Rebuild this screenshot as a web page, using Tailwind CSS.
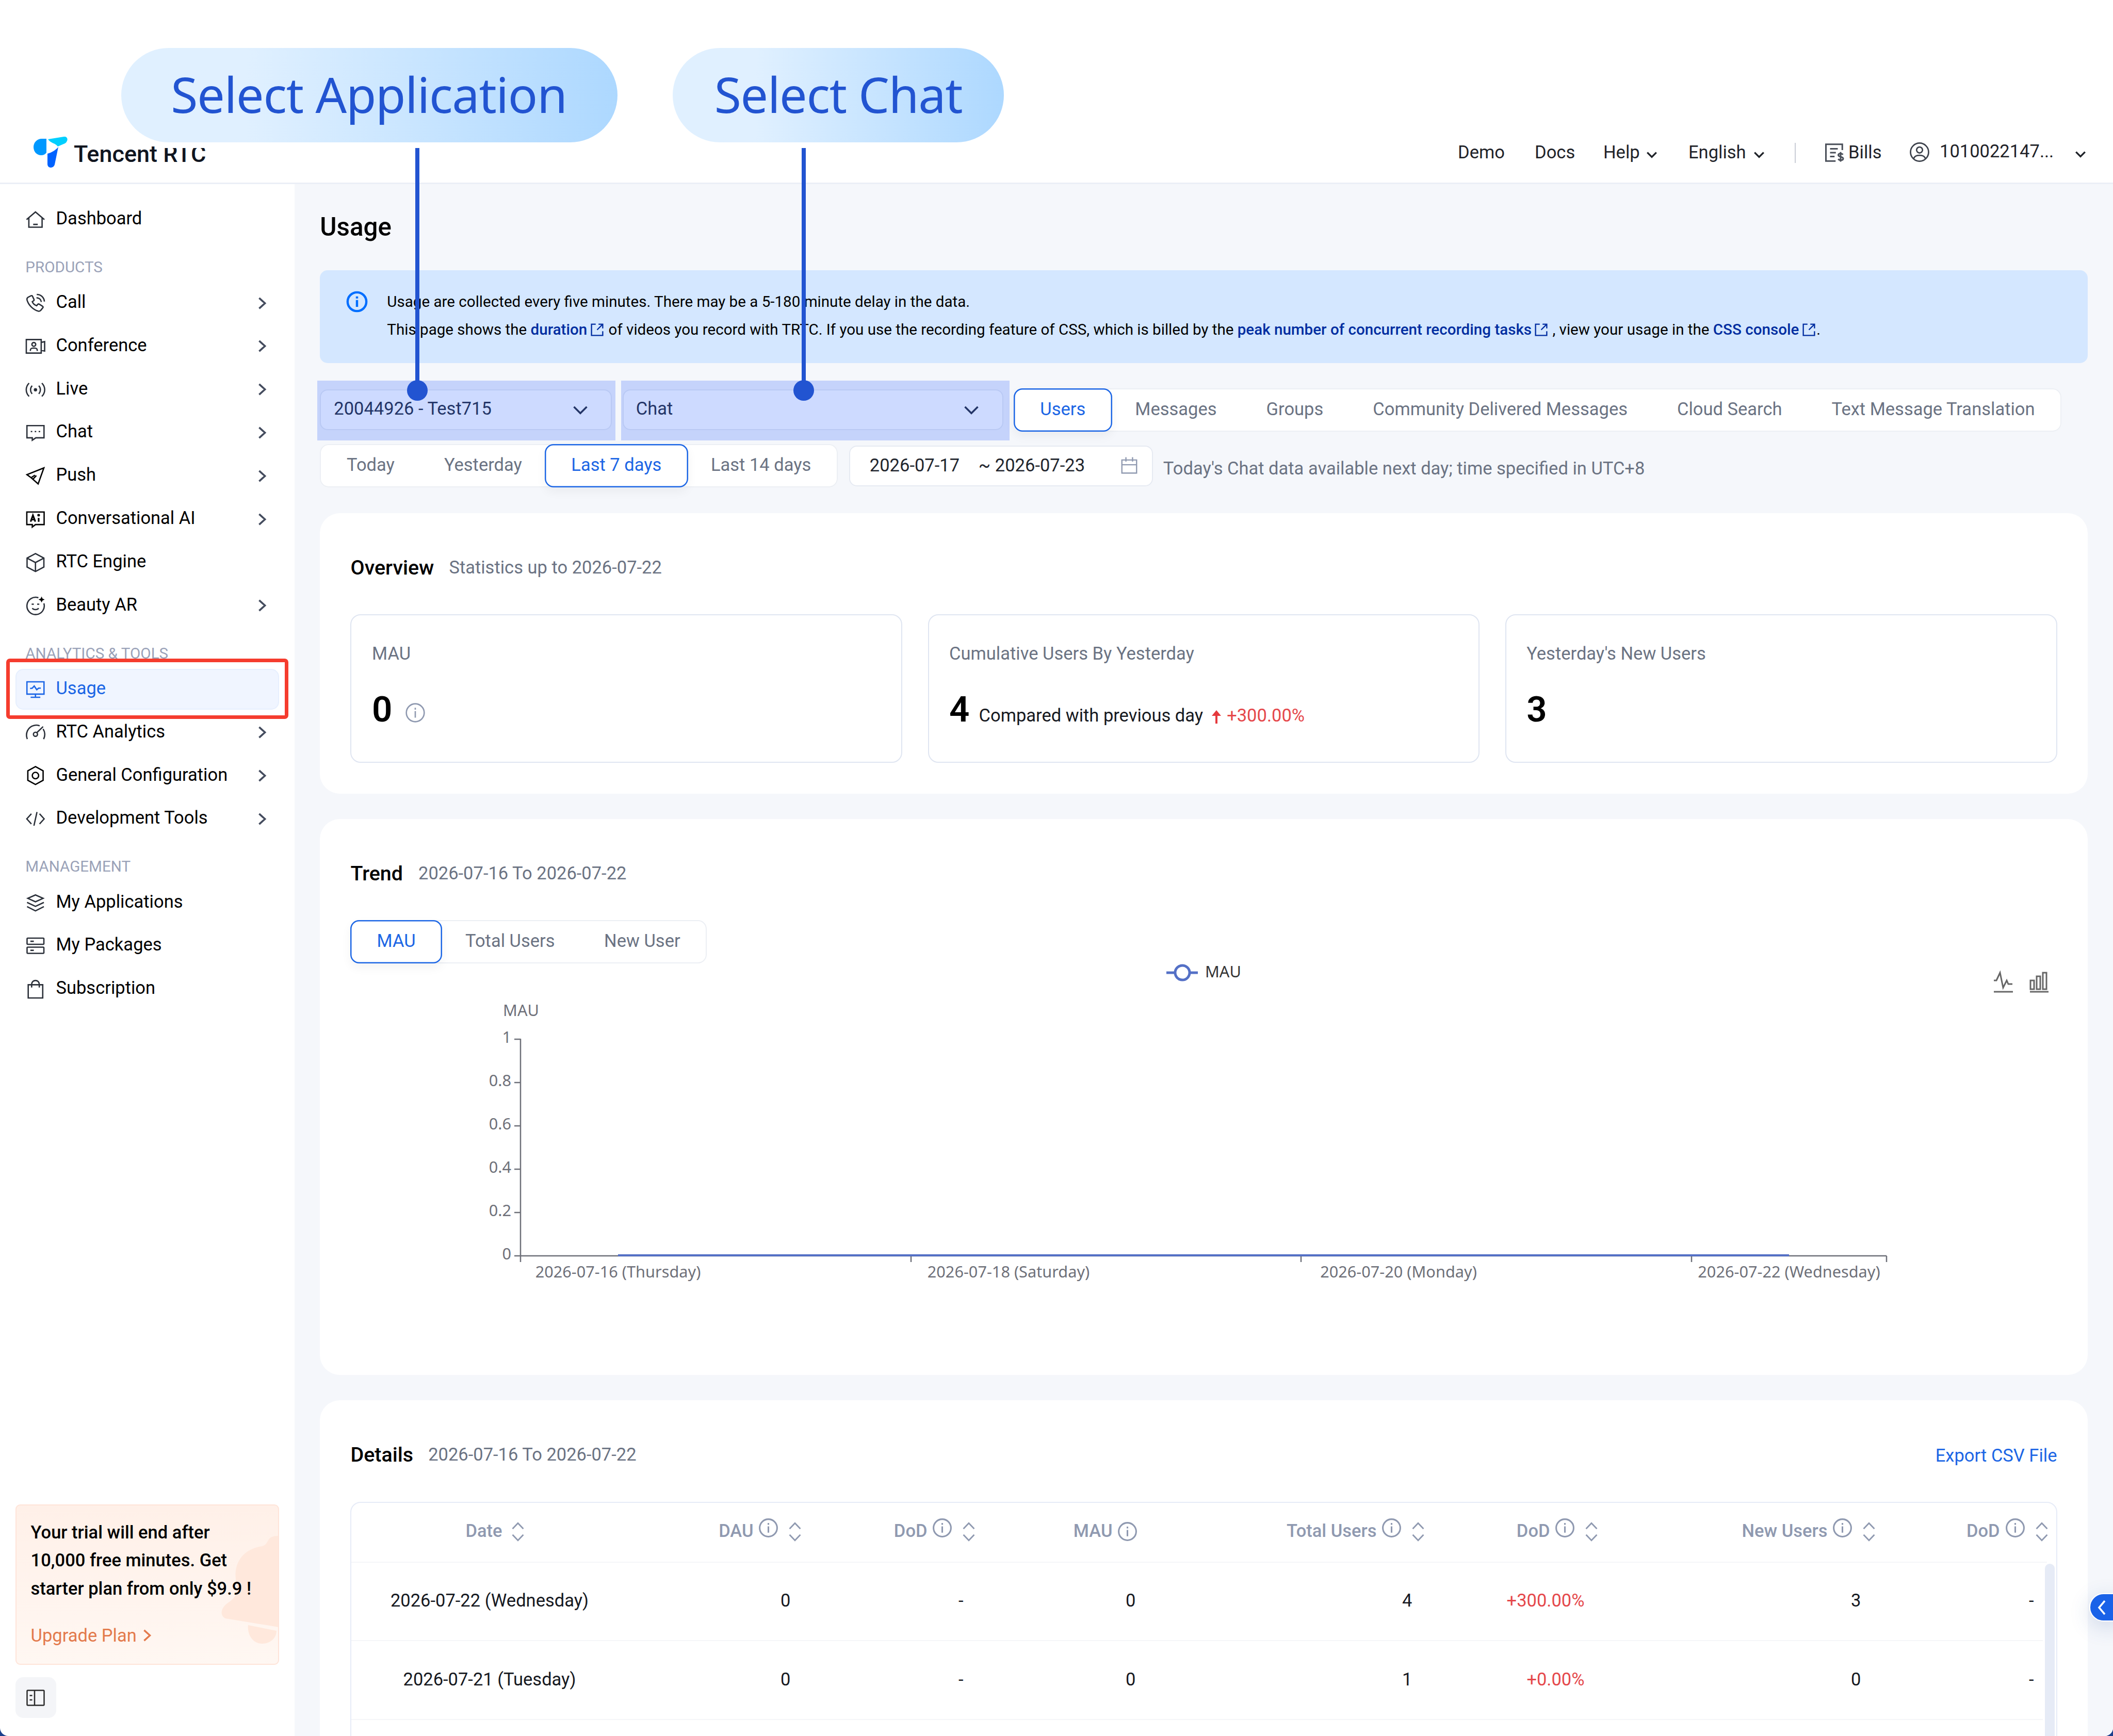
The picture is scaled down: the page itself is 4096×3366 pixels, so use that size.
<!DOCTYPE html>
<html lang="en" class="text-[39.45px]">

    <head>
        <meta charset="UTF-8" />
        <meta name="viewport" content="width=device-width, initial-scale=1.0" />
        <title>Tencent RTC - Usage</title>
        <script src="https://cdn.jsdelivr.net/npm/@tailwindcss/browser@4"></script>
    </head>

    <body class="bg-[#1b3f8c] font-['Roboto','Liberation_Sans',sans-serif] text-black text-sm w-[4096px] h-[3366px] overflow-hidden">
        <!-- Icon sprite -->
        <svg class="hidden">
            <symbol id="i-home" viewBox="0 0 16 16"><path d="M1 8 8 2l7 6M2.8 6.8V14h10.4V6.8M6.2 11.8h3.6" /></symbol>
            <symbol id="i-call" viewBox="0 0 16 16"><path d="M4.6 2.2 2.2 3.4c-.9.5-1 1.300-.8 2.200 1.200 4.100 4.900 7.600 8.800 8.700.9.200 1.500 0 2-.7l1.600-2c.3-.4.2-.8-.2-1.100l-2.700-1.700c-.4-.2-.8-.2-1.100.2l-.9 1C7 9.400 6 8.200 5.500 6.900l1.100-.8c.4-.3.4-.7.200-1.100L5.600 2.500c-.2-.4-.6-.5-1-.3ZM9 1.200c3.200-.1 5.800 2.300 6 5.600M8.800 3.800c2 0 3.500 1.300 3.800 3.300" /></symbol>
            <symbol id="i-conf" viewBox="0 0 16 16"><path d="M.8 2.600h11.700v2.200l2.700-.6v7.400l-2.700-.6v2.200H.8V2.600ZM12.500 5v6M4 11.500V11c0-1 .8-1.700 1.700-1.700h2c1 0 1.700.7 1.700 1.700v.5" /><circle cx="6.700" cy="6.400" r="1.500" /></symbol>
            <symbol id="i-live" viewBox="0 0 16 16"><path d="M3 2.800C0 5.700 0 10.300 3 13.200M5.400 4.800c-1.700 1.800-1.700 4.600 0 6.400M13 2.800c3 2.900 3 7.500 0 10.400M10.600 4.800c1.700 1.800 1.700 4.600 0 6.400" /><circle cx="8" cy="8" r=".8" fill="currentColor" /></symbol>
            <symbol id="i-chat" viewBox="0 0 16 16"><path d="M1.300 2.500h13.400v9.600H8.300l-2.800 1.900v-1.900H1.300V2.500Z" /><path d="M4.300 7.200h1.200M7.400 7.200h1.200M10.500 7.200h1.200" /></symbol>
            <symbol id="i-push" viewBox="0 0 16 16"><path d="M14.600 1.700 1.300 7l3.300 2.400 5.500 4.900 4.500-12.600ZM4.600 9.400l3-2M6 10.600l2.700-2.900" /></symbol>
            <symbol id="i-ai" viewBox="0 0 16 16"><path d="M1.200 2.300h13.600v9.900H8L5.500 14.100v-1.900H1.200V2.300Z" /><path d="M4.200 9.900 6 4.900l1.900 5M4.900 8.300h2.300M10.500 7v3M10.500 3.800v2M9.500 4.800h2" stroke-width="1.300" /></symbol>
            <symbol id="i-cube" viewBox="0 0 16 16"><path d="m8 1 6.600 3.500v7L8 15l-6.600-3.500v-7L8 1ZM1.400 4.500 8 8l6.600-3.500M8 8v7" /></symbol>
            <symbol id="i-beauty" viewBox="0 0 16 16"><path d="M10.300 1.600A6.800 6.800 0 1 0 14.600 6M5.500 9.800c1.200 1.500 3.800 1.500 5 0M5 6.700h1.700M9.300 6.700H11" /><path d="m12.800.6.700 1.600 1.700.8-1.700.8-.7 1.600-.7-1.600-1.700-.8 1.700-.8.700-1.600Z" fill="currentColor" stroke="none" /></symbol>
            <symbol id="i-usage" viewBox="0 0 16 16"><path d="M1.300 2h13.400v9.700H1.300V2ZM8 11.700v2.300M4.200 14.200h7.600M3.800 7.300l1.700-.3 1.500-1.700 2 2.900 1.500-1.200h1.700" /></symbol>
            <symbol id="i-gauge" viewBox="0 0 16 16"><path d="M1.600 13C-.2 8.500 2 3.500 6.700 2.300c1.600-.4 3.200-.3 4.600.3M14 5c1.500 2.300 1.700 5.300.4 8M9.200 7.800 14 3.200" /><circle cx="8" cy="9.200" r="1.600" /></symbol>
            <symbol id="i-hex" viewBox="0 0 16 16"><path d="m8 1 6 3.300v7.400L8 15l-6-3.300V4.300L8 1Z" /><circle cx="8" cy="8" r="2.500" /></symbol>
            <symbol id="i-code" viewBox="0 0 16 16"><path d="M4.800 4 1.200 8l3.600 4M11.200 4l3.600 4-3.600 4M9.200 2.600 6.800 13.400" /></symbol>
            <symbol id="i-layers" viewBox="0 0 16 16"><path d="m8 1.700 6 2.700-6 2.700-6-2.700 6-2.700ZM1.400 7.600 8 10.700l6.600-3.100M1.400 10.900 8 14.200l6.600-3.300" /></symbol>
            <symbol id="i-server" viewBox="0 0 16 16"><rect x="1.400" y="2" width="13.200" height="4.900" rx=".6" /><rect x="1.400" y="9.100" width="13.200" height="4.900" rx=".6" /><path d="M4 4.500h2.700M4 11.600h2.700" /></symbol>
            <symbol id="i-bag" viewBox="0 0 16 16"><path d="M2.300 4.600h11.400V15H2.300V4.600ZM5 6.800V4.400c0-4.200 6-4.200 6 0v2.400" /></symbol>
            <symbol id="i-info" viewBox="0 0 16 16"><circle cx="8" cy="8" r="6.600" /><path d="M8 6.800v4.800M8 4.300v1.400" /></symbol>
            <symbol id="i-down" viewBox="0 0 16 16"><path d="m3 5.500 5 5 5-5" /></symbol>
            <symbol id="i-right" viewBox="0 0 16 16"><path d="m5.500 3.500 5 4.500-5 4.500" /></symbol>
            <symbol id="i-sort" viewBox="0 0 16 16"><path d="m3.600 5.600 4.400-4.600 4.400 4.600M3.600 10.400 8 15l4.400-4.600" /></symbol>
            <symbol id="i-ext" viewBox="0 0 16 16"><path d="M6.500 2H2v12h12V9.500M9.500 2H14v4.500M14 2 8 8" /></symbol>
            <symbol id="i-cal" viewBox="0 0 16 16"><path d="M2 3.300h12V14H2V3.300ZM2 7.200h12M5.300 1v3.600M10.700 1v3.600" /></symbol>
        </svg>

        <div class="relative w-full h-full bg-white rounded-b-[16px] overflow-hidden">
            <!-- Top bar -->
            <header class="h-[357px] border-b-[3px] border-[#ebeff6] flex items-end justify-between text-[#1f2329]">
                <div class="flex items-center pl-[64px] pb-[28px]">
                    <svg class="w-[67px] h-[61px]" viewBox="0 0 67 61">
                        <path d="M26 4v27c-2 3-6 5-10 5C7 36 1 29 1 20 1 11 8 4 17 4h9Z" fill="#0098ff" />
                        <path d="M29 5 60 0c5-1 8 4 6 8-1 2-2 4-4 5L48 19C43 12 34 13 29 5Z" fill="#00cfff" />
                        <path d="M49 20 42 54c-2 8-14 8-14-1V33c8-2 16-7 21-13Z" fill="#0062ff" />
                    </svg>
                    <span class="ml-[12px] mt-[7px] text-[45px] leading-[50px] font-medium text-[#10151f] whitespace-nowrap">Tencent RTC</span>
                </div>
                <nav class="flex items-center h-[80px] pb-0 mb-[18px] pr-[49px] whitespace-nowrap">
                    <span class="w-[149px]">Demo</span>
                    <span class="w-[133px]">Docs</span>
                    <span class="w-[165px] flex items-center">Help<svg class="w-[28px] h-[28px] ml-[9px] mt-[8px] fill-none stroke-current stroke-[2]"><use href="#i-down" /></svg></span>
                    <span class="w-[206px] flex items-center">English<svg class="w-[28px] h-[28px] ml-[11px] mt-[8px] fill-none stroke-current stroke-[2]"><use href="#i-down" /></svg></span>
                    <span class="w-[2px] h-[39px] bg-[#c9cdd6] mr-[54px]"></span>
                    <svg class="w-[40px] h-[40px] mr-[8px] fill-none stroke-[#4a4f59] stroke-[1.2]" viewBox="0 0 16 16"><path d="M14.500 6V1.500H1.800v13h7.500M5 5h6M5 8h4.500M5 11h3.500" /><path d="M15 9.500c-1-1.300-3.600-1-3.600.4 0 1.600 3.800 1 3.800 2.700 0 1.500-2.800 1.700-3.900.3M13.200 7.500v7.500" /></svg>
                    <span class="w-[118px]">Bills</span>
                    <svg class="w-[40px] h-[40px] mr-[19px] -mt-[3px] fill-none stroke-[#3c414b] stroke-[1.100]" viewBox="0 0 16 16"><circle cx="8" cy="8" r="7" /><circle cx="8" cy="6.300" r="2.300" /><path d="M3.500 13c.5-2 2-2.600 4.500-2.600s4 .6 4.500 2.600" /></svg>
                    <span class="w-[259px] -mt-[5px]">1010022147...</span>
                    <svg class="w-[28px] h-[28px] mt-[6px] fill-none stroke-current stroke-[2]"><use href="#i-down" /></svg>
                </nav>
            </header>

            <div class="flex h-[3009px]">
                <!-- Sidebar -->
                <aside class="w-[571px] flex-none flex flex-col px-[29.600px] pt-[29px] pb-[35px] fill-none">
                    <div class="flex flex-col gap-[4.930px] stroke-[#2b3039] stroke-[1.050]">
                        <div class="h-[78.900px] flex items-center pl-[19.700px] pr-[15px]"><svg class="w-[39.500px] h-[39.500px] mr-[19.700px]"><use href="#i-home" /></svg><span class="pb-[4px]">Dashboard</span></div>
                        <div class="h-[73.500px] flex items-center pl-[19.700px] text-xs text-[#9aa2b8]"><span class="pt-[24px]">PRODUCTS</span></div>
                        <div class="h-[78.900px] flex items-center pl-[19.700px] pr-[15px]"><svg class="w-[39.500px] h-[39.500px] mr-[19.700px]"><use href="#i-call" /></svg><span class="flex-1 pb-[4px]">Call</span><svg class="w-[36px] h-[36px] stroke-[#444c5e] stroke-[1.600]"><use href="#i-right" /></svg></div>
                        <div class="h-[78.900px] flex items-center pl-[19.700px] pr-[15px]"><svg class="w-[39.500px] h-[39.500px] mr-[19.700px]"><use href="#i-conf" /></svg><span class="flex-1 pb-[4px]">Conference</span><svg class="w-[36px] h-[36px] stroke-[#444c5e] stroke-[1.600]"><use href="#i-right" /></svg></div>
                        <div class="h-[78.900px] flex items-center pl-[19.700px] pr-[15px]"><svg class="w-[39.500px] h-[39.500px] mr-[19.700px]"><use href="#i-live" /></svg><span class="flex-1 pb-[4px]">Live</span><svg class="w-[36px] h-[36px] stroke-[#444c5e] stroke-[1.600]"><use href="#i-right" /></svg></div>
                        <div class="h-[78.900px] flex items-center pl-[19.700px] pr-[15px]"><svg class="w-[39.500px] h-[39.500px] mr-[19.700px]"><use href="#i-chat" /></svg><span class="flex-1 pb-[4px]">Chat</span><svg class="w-[36px] h-[36px] stroke-[#444c5e] stroke-[1.600]"><use href="#i-right" /></svg></div>
                        <div class="h-[78.900px] flex items-center pl-[19.700px] pr-[15px]"><svg class="w-[39.500px] h-[39.500px] mr-[19.700px] stroke-black"><use href="#i-push" /></svg><span class="flex-1 pb-[4px]">Push</span><svg class="w-[36px] h-[36px] stroke-[#444c5e] stroke-[1.600]"><use href="#i-right" /></svg></div>
                        <div class="h-[78.900px] flex items-center pl-[19.700px] pr-[15px]"><svg class="w-[39.500px] h-[39.500px] mr-[19.700px] stroke-black"><use href="#i-ai" /></svg><span class="flex-1 pb-[4px]">Conversational AI</span><svg class="w-[36px] h-[36px] stroke-[#444c5e] stroke-[1.600]"><use href="#i-right" /></svg></div>
                        <div class="h-[78.900px] flex items-center pl-[19.700px] pr-[15px]"><svg class="w-[39.500px] h-[39.500px] mr-[19.700px]"><use href="#i-cube" /></svg><span class="flex-1 pb-[4px]">RTC Engine</span></div>
                        <div class="h-[78.900px] flex items-center pl-[19.700px] pr-[15px]"><svg class="w-[39.500px] h-[39.500px] mr-[19.700px]"><use href="#i-beauty" /></svg><span class="flex-1 pb-[4px]">Beauty AR</span><svg class="w-[36px] h-[36px] stroke-[#444c5e] stroke-[1.600]"><use href="#i-right" /></svg></div>
                        <div class="h-[73.500px] flex items-center pl-[19.700px] text-xs text-[#9aa2b8]"><span class="pt-[24px]">ANALYTICS &amp; TOOLS</span></div>
                        <div class="relative h-[78.900px] flex items-center pl-[17.700px] pr-[15px] rounded-[15px] bg-[#f0f5ff] border-2 border-[#e6effe] text-[#1c66e5] stroke-[#1c66e5]"><svg class="w-[39.500px] h-[39.500px] mr-[19.700px]"><use href="#i-usage" /></svg><span class="flex-1 pb-[4px]">Usage</span>
                            <!-- Highlight frame around the active entry -->
                            <div class="absolute -left-[20px] -top-[22px] w-[547px] h-[117px] border-[7px] border-[#f53c2e] rounded-[7px]"></div>
                        </div>
                        <div class="h-[78.900px] flex items-center pl-[19.700px] pr-[15px]"><svg class="w-[39.500px] h-[39.500px] mr-[19.700px]"><use href="#i-gauge" /></svg><span class="flex-1 pb-[4px]">RTC Analytics</span><svg class="w-[36px] h-[36px] stroke-[#444c5e] stroke-[1.600]"><use href="#i-right" /></svg></div>
                        <div class="h-[78.900px] flex items-center pl-[19.700px] pr-[15px]"><svg class="w-[39.500px] h-[39.500px] mr-[19.700px] stroke-black"><use href="#i-hex" /></svg><span class="flex-1 pb-[4px] whitespace-nowrap">General Configuration</span><svg class="w-[36px] h-[36px] stroke-[#444c5e] stroke-[1.600]"><use href="#i-right" /></svg></div>
                        <div class="h-[78.900px] flex items-center pl-[19.700px] pr-[15px]"><svg class="w-[39.500px] h-[39.500px] mr-[19.700px]"><use href="#i-code" /></svg><span class="flex-1 pb-[4px]">Development Tools</span><svg class="w-[36px] h-[36px] stroke-[#444c5e] stroke-[1.600]"><use href="#i-right" /></svg></div>
                        <div class="h-[73.500px] flex items-center pl-[19.700px] text-xs text-[#9aa2b8]"><span class="pt-[24px]">MANAGEMENT</span></div>
                        <div class="h-[78.900px] flex items-center pl-[19.700px] pr-[15px]"><svg class="w-[39.500px] h-[39.500px] mr-[19.700px]"><use href="#i-layers" /></svg><span class="pb-[4px]">My Applications</span></div>
                        <div class="h-[78.900px] flex items-center pl-[19.700px] pr-[15px]"><svg class="w-[39.500px] h-[39.500px] mr-[19.700px]"><use href="#i-server" /></svg><span class="pb-[4px]">My Packages</span></div>
                        <div class="h-[78.900px] flex items-center pl-[19.700px] pr-[15px]"><svg class="w-[39.500px] h-[39.500px] mr-[19.700px]"><use href="#i-bag" /></svg><span class="pb-[4px]">Subscription</span></div>
                    </div>

                    <!-- Trial card -->
                    <div class="relative mt-auto h-[311px] rounded-[9px] border-2 border-[#ffe4d9] bg-linear-to-b from-[#fff0e8] to-[#fff7f2] overflow-hidden px-[28px] pt-[25px]">
                        <svg class="absolute -left-[2px] -top-[2px] w-[511px] h-[311px]" viewBox="0 0 511 311">
                            <path d="M511 61c-10 0-17 2-20 7-4 6-5 11-13 13-26 4-44 18-50 42-4 16 1 27 1 40 0 18-12 24-20 30-10 8-14 22-2 28l104 17V61Z" fill="#ffe8dc" />
                            <path d="M451 234l55 11c0 14-12 25-28 25-17 0-29-16-27-36Z" fill="#ffe8dc" />
                        </svg>
                        <p class="relative font-medium leading-[54.300px] whitespace-nowrap">Your trial will end after<br />10,000 free minutes. Get<br />starter plan from only $9.9 !</p>
                        <div class="relative flex items-center mt-[37px] leading-[54px] text-[#e37a4c]">Upgrade Plan<svg class="w-[36px] h-[36px] ml-[2px] stroke-current stroke-[1.500]"><use href="#i-right" /></svg></div>
                    </div>
                    <div class="flex-none mt-[24px] w-[79px] h-[79px] rounded-[15px] bg-[#f4f5f8] flex items-center justify-center">
                        <svg class="w-[36px] h-[32px] stroke-[#2b2b2b] stroke-[2.500]" viewBox="0 0 36 32"><rect x="1.500" y="1.500" width="33" height="29" rx="1.500" /><path d="M16 1.500v29M6.500 11.500h5M6.500 20h5" /></svg>
                    </div>
                </aside>

                <!-- Content -->
                <main class="flex-1 bg-[#f5f7fb] px-[49.300px] pt-[53px] text-[#6b7383] overflow-hidden">
                    <h1 class="text-xl leading-[60px] font-medium text-black">Usage</h1>

                    <div class="mt-[54px] h-[180px] rounded-[15px] bg-[#d4e7ff] flex pl-[50px] pt-[34px] text-xs leading-[54.300px] text-black fill-none">
                        <svg class="w-[44px] h-[44px] mt-[5px] mr-[36px] stroke-[#006eff] stroke-[1.600]"><use href="#i-info" /></svg>
                        <div class="whitespace-nowrap">
                            <p>Usage are collected every five minutes. There may be a 5-180 minute delay in the data.</p>
                            <p>This page shows the <a class="font-medium text-[#002da0]">duration<svg class="inline-block w-[29px] h-[29px] ml-[5px] -mt-[3px] stroke-current stroke-[1.300]"><use href="#i-ext" /></svg></a> of videos you record with TRTC. If you use the recording feature of CSS, which is billed by the <a class="font-medium text-[#002da0]">peak number of concurrent recording tasks<svg class="inline-block w-[29px] h-[29px] ml-[4px] -mt-[3px] stroke-current stroke-[1.300]"><use href="#i-ext" /></svg></a> , view your usage in the <a class="font-medium text-[#002da0]">CSS console<svg class="inline-block w-[29px] h-[29px] ml-[5px] -mt-[3px] stroke-current stroke-[1.300]"><use href="#i-ext" /></svg></a>.</p>
                        </div>
                    </div>

                    <!-- Filters -->
                    <div class="mt-[48.500px] flex items-center h-[84px] whitespace-nowrap">
                        <div class="w-[566px] h-[79px] flex items-center justify-between pl-[25px] pr-[39px] pb-[4px] bg-white border-2 border-[#e6eaf2] rounded-[15px] text-[#2b3142]">20044926 - Test715<svg class="w-[40px] h-[40px] mt-[5px] fill-none stroke-current stroke-[1.400]"><use href="#i-down" /></svg></div>
                        <div class="ml-[20.500px] w-[738px] h-[79px] flex items-center justify-between pl-[24px] pr-[40px] pb-[4px] bg-white border-2 border-[#e6eaf2] rounded-[15px] text-[#2b3142]">Chat<svg class="w-[40px] h-[40px] mt-[5px] fill-none stroke-current stroke-[1.400]"><use href="#i-down" /></svg></div>
                        <div class="ml-[20px] h-[84px] flex bg-white rounded-[17px] ring-2 ring-inset ring-[#eceff4] leading-[80px]">
                            <span class="px-[51.500px] text-[#1c66e5] rounded-[17px] ring-[2.500px] ring-inset ring-[#1c66e5] shadow-[0_8px_20px_rgba(0,0,0,0.05)]">Users</span>
                            <span class="pl-[44.500px] pr-[48px]">Messages</span>
                            <span class="px-[48px]">Groups</span>
                            <span class="px-[48px]">Community Delivered Messages</span>
                            <span class="px-[48px]">Cloud Search</span>
                            <span class="pl-[48px] pr-[51px]">Text Message Translation</span>
                        </div>
                    </div>
                    <div class="mt-[24.500px] flex items-center h-[84px] whitespace-nowrap">
                        <div class="h-[84px] flex bg-white rounded-[17px] ring-2 ring-inset ring-[#eceff4] leading-[80px]">
                            <span class="pl-[51.700px] pr-[48px]">Today</span>
                            <span class="pl-[48px] pr-[44px]">Yesterday</span>
                            <span class="px-[51.500px] text-[#1c66e5] rounded-[17px] ring-[2.500px] ring-inset ring-[#1c66e5] shadow-[0_8px_20px_rgba(0,0,0,0.05)]">Last 7 days</span>
                            <span class="pl-[44px] pr-[51.500px]">Last 14 days</span>
                        </div>
                        <div class="ml-[22px] w-[589px] h-[79px] flex items-center bg-white border-2 border-[#e6eaf2] rounded-[15px] pl-[38px] text-[#22262e]">
                            <span class="w-[211px]">2026-07-17</span><span class="w-[32px]">~</span><span class="w-[241px]">2026-07-23</span>
                            <svg class="w-[38px] h-[38px] fill-none stroke-[#8f99b0] stroke-1"><use href="#i-cal" /></svg>
                        </div>
                        <span class="ml-[20px] mt-[11px]">Today's Chat data available next day; time specified in UTC+8</span>
                    </div>

                    <!-- Overview -->
                    <section class="mt-[50px] h-[543.500px] bg-white rounded-[39px] px-[59.200px] pt-[71px]">
                        <div class="flex items-center h-[70px]"><h2 class="text-base font-medium text-black mr-[29px]">Overview</h2><span>Statistics up to 2026-07-22</span></div>
                        <div class="mt-[55px] grid grid-cols-3 gap-[49.300px]">
                            <div class="h-[288px] border-[2.500px] border-[#dfe5f1] rounded-[20px] px-[39.500px] pt-[49px]">
                                <div class="leading-[50px]">MAU</div>
                                <div class="mt-[44px] flex items-center leading-[80px]"><b class="text-[69px] font-semibold text-black">0</b><svg class="w-[42px] h-[42px] ml-[24px] mt-[12px] fill-none stroke-[#8f99b0] stroke-1"><use href="#i-info" /></svg></div>
                            </div>
                            <div class="h-[288px] border-[2.500px] border-[#dfe5f1] rounded-[20px] px-[39.500px] pt-[49px]">
                                <div class="leading-[50px]">Cumulative Users By Yesterday</div>
                                <div class="mt-[44px] flex items-baseline leading-[80px] text-[#16191f]"><b class="text-[69px] font-semibold text-black mr-[18px]">4</b>Compared with previous day<svg class="w-[20px] h-[26px] ml-[16px] mr-[10px] self-center mt-[16px]" viewBox="0 0 20 26"><path d="M10 0 19 11H12v15H8V11H1Z" fill="#e5393d" /></svg><span class="text-[#e5484b]">+300.00%</span></div>
                            </div>
                            <div class="h-[288px] border-[2.500px] border-[#dfe5f1] rounded-[20px] px-[39.500px] pt-[49px]">
                                <div class="leading-[50px]">Yesterday's New Users</div>
                                <div class="mt-[44px] leading-[80px]"><b class="text-[69px] font-semibold text-black">3</b></div>
                            </div>
                        </div>
                    </section>

                    <!-- Trend -->
                    <section class="mt-[49px] h-[1078px] bg-white rounded-[39px] px-[59.200px] pt-[71.500px]">
                        <div class="flex items-center h-[70px]"><h2 class="text-base font-medium text-black mr-[30px]">Trend</h2><span>2026-07-16 To 2026-07-22</span></div>
                        <div class="mt-[55px] w-fit h-[84px] flex rounded-[17px] ring-2 ring-inset ring-[#eceff4] leading-[80px] whitespace-nowrap">
                            <span class="px-[51px] text-[#1c66e5] rounded-[17px] ring-[2.500px] ring-inset ring-[#1c66e5] shadow-[0_8px_20px_rgba(0,0,0,0.05)]">MAU</span>
                            <span class="pl-[45.500px] pr-[46px]">Total Users</span>
                            <span class="pl-[49.500px] pr-[51.500px]">New User</span>
                        </div>
                        <svg class="w-[3308px] h-[738px] mt-[1px] overflow-visible font-['Noto_Sans',sans-serif] text-[30.700px] fill-[#6e7079]" viewBox="0 0 3308 738">
                            <g fill="none" stroke="#5470c6" stroke-width="5"><path d="M1582 17h61" /><circle cx="1613" cy="17" r="14" fill="#fff" /></g>
                            <text x="1657" y="26" fill="#333">MAU</text>
                            <!-- Chart type switches -->
                            <g fill="none" stroke="#666" stroke-width="3"><path d="M3186 32h5l7-15 6 29 7-14 3 7h8M3186 54h37M3257 32h7v17h-7ZM3269 24h7v25h-7ZM3281 17h7v32h-7ZM3256 54h36" /></g>
                            <g fill="none" stroke="#6e7079" stroke-width="2.500">
                                <path d="M330 145v421H2978M318 146h12M318 230h12M318 314h12M318 398h12M318 482h12M318 566h12M330 566v12M1087 566v12M1843 566v12M2600 566v12M2978 566v12" />
                            </g>
                            <path d="M519 565H2789" stroke="#5470c6" stroke-width="4" />
                            <text x="331" y="101" text-anchor="middle">MAU</text>
                            <g text-anchor="end"><text x="312" y="153">1</text><text x="312" y="237">0.8</text><text x="312" y="321">0.6</text><text x="312" y="405">0.4</text><text x="312" y="489">0.2</text><text x="312" y="573">0</text></g>
                            <g text-anchor="middle"><text x="519" y="608">2026-07-16 (Thursday)</text><text x="1276" y="608">2026-07-18 (Saturday)</text><text x="2032" y="608">2026-07-20 (Monday)</text><text x="2789" y="608">2026-07-22 (Wednesday)</text></g>
                        </svg>
                    </section>

                    <!-- Details -->
                    <section class="mt-[49px] h-[900px] bg-white rounded-[39px] px-[59.200px] pt-[71px]">
                        <div class="flex items-center h-[70px]"><h2 class="text-base font-medium text-black mr-[29px]">Details</h2><span>2026-07-16 To 2026-07-22</span><a class="ml-auto mt-[4px] text-[#1c66e5]">Export CSV File</a></div>
                        <div class="relative mt-[56px] h-[800px] border-[2.500px] border-[#e6ebf7] rounded-t-[20px] whitespace-nowrap">
                            <div class="flex h-[116px] items-center pb-[4px] border-b-2 border-[#f5f6f8] mr-[18px] font-medium text-[#8f99b0] fill-none stroke-[#8f99b0] stroke-[1.200]">
                                <div class="w-[534px] pl-[221px] flex items-center">Date<svg class="w-[38px] h-[38px] ml-[11px] mt-[4px]"><use href="#i-sort" /></svg></div>
                                <div class="w-[347px] pr-[2px] flex items-center justify-end">DAU<svg class="w-[41px] h-[41px] ml-[9px] -mt-[12px]"><use href="#i-info" /></svg><svg class="w-[38px] h-[38px] ml-[12px] mt-[4px]"><use href="#i-sort" /></svg></div>
                                <div class="w-[337px] pr-[2px] flex items-center justify-end">DoD<svg class="w-[41px] h-[41px] ml-[9px] -mt-[12px]"><use href="#i-info" /></svg><svg class="w-[38px] h-[38px] ml-[12px] mt-[4px]"><use href="#i-sort" /></svg></div>
                                <div class="w-[329px] pr-[22px] flex items-center justify-end">MAU<svg class="w-[41px] h-[41px] ml-[9px] mt-[2px]"><use href="#i-info" /></svg></div>
                                <div class="w-[542px] pr-[2px] flex items-center justify-end">Total Users<svg class="w-[41px] h-[41px] ml-[9px] -mt-[12px]"><use href="#i-info" /></svg><svg class="w-[38px] h-[38px] ml-[12px] mt-[4px]"><use href="#i-sort" /></svg></div>
                                <div class="w-[336px] pr-[2px] flex items-center justify-end">DoD<svg class="w-[41px] h-[41px] ml-[9px] -mt-[12px]"><use href="#i-info" /></svg><svg class="w-[38px] h-[38px] ml-[12px] mt-[4px]"><use href="#i-sort" /></svg></div>
                                <div class="w-[538px] pr-[2px] flex items-center justify-end">New Users<svg class="w-[41px] h-[41px] ml-[9px] -mt-[12px]"><use href="#i-info" /></svg><svg class="w-[38px] h-[38px] ml-[12px] mt-[4px]"><use href="#i-sort" /></svg></div>
                                <div class="flex-1 pr-[2px] -mr-[11px] flex items-center justify-end">DoD<svg class="w-[41px] h-[41px] ml-[9px] -mt-[12px]"><use href="#i-info" /></svg><svg class="w-[38px] h-[38px] ml-[12px] mt-[4px]"><use href="#i-sort" /></svg></div>
                            </div>
                            <div class="flex h-[152.800px] items-center border-b-2 border-[#f5f6f8] mr-[26px] pb-[2px] text-right text-[#16191f]">
                                <div class="w-[534px] pl-[1px] text-center">2026-07-22 (Wednesday)</div>
                                <div class="w-[344px] pr-[27px]">0</div>
                                <div class="w-[338px] pr-[30px]">-</div>
                                <div class="w-[330px] pr-[26px]">0</div>
                                <div class="w-[542px] pr-[32px]">4</div>
                                <div class="w-[336px] pr-[34px] text-[#e5484b]">+300.00%</div>
                                <div class="w-[538px] pr-[36px]">3</div>
                                <div class="flex-1 pr-[17px]">-</div>
                            </div>
                            <div class="flex h-[152.800px] items-center border-b-2 border-[#f5f6f8] mr-[26px] pb-[2px] text-right text-[#16191f]">
                                <div class="w-[534px] pl-[1px] text-center">2026-07-21 (Tuesday)</div>
                                <div class="w-[344px] pr-[27px]">0</div>
                                <div class="w-[338px] pr-[30px]">-</div>
                                <div class="w-[330px] pr-[26px]">0</div>
                                <div class="w-[542px] pr-[32px]">1</div>
                                <div class="w-[336px] pr-[34px] text-[#e5484b]">+0.00%</div>
                                <div class="w-[538px] pr-[36px]">0</div>
                                <div class="flex-1 pr-[17px]">-</div>
                            </div>
                            <!-- Scrollbar thumb -->
                            <div class="absolute right-[3px] top-[118px] w-[19px] h-[600px] rounded-full bg-[#e6ebf6]"></div>
                        </div>
                    </section>
                </main>
            </div>

            <!-- Side drawer handle -->
            <div class="absolute left-[4050px] top-[3089px] w-[62px] h-[55px] rounded-l-full bg-[#1a62e8] border-[2.500px] border-white shadow-[0_10px_40px_rgba(40,80,150,0.18)] flex items-center pl-[10px]">
                <svg class="w-[28px] h-[34px] fill-none stroke-white stroke-[3.500]" viewBox="0 0 28 34"><path d="M18 4 7 17l11 13" /></svg>
            </div>

            <!-- Callouts -->
            <div class="absolute left-[317px] top-0 w-[1700px] h-[287px] bg-white"></div>
            <div class="absolute left-[235px] top-[93px] w-[962px] h-[183px] pb-[3px] pr-[2px] rounded-full bg-linear-to-r from-[#e0f0ff] from-25% to-[#add8ff] flex items-center justify-center text-[95px] tracking-[-1.200px] text-[#2254d1] font-['Noto_Sans',sans-serif] whitespace-nowrap">Select Application</div>
            <div class="absolute left-[1304px] top-[93px] w-[642px] h-[183px] pb-[3px] rounded-full bg-linear-to-r from-[#e0f0ff] from-25% to-[#add8ff] flex items-center justify-center text-[95px] tracking-[-1.300px] text-[#2254d1] font-['Noto_Sans',sans-serif] whitespace-nowrap">Select Chat</div>
            <div class="absolute left-[615px] top-[738px] w-[578px] h-[115.500px] bg-[#0546ff]/20"></div>
            <div class="absolute left-[1204px] top-[738px] w-[752.500px] h-[115.500px] bg-[#0546ff]/20"></div>
            <div class="absolute left-[805px] top-[287px] w-[8px] h-[470px] bg-[#2254d1]"></div>
            <div class="absolute left-[1554px] top-[287px] w-[8px] h-[470px] bg-[#2254d1]"></div>
            <div class="absolute left-[788.500px] top-[736.500px] w-[40px] h-[40px] rounded-full bg-[#2254d1]"></div>
            <div class="absolute left-[1538px] top-[736.500px] w-[40px] h-[40px] rounded-full bg-[#2254d1]"></div>
        </div>
    </body>

</html>
